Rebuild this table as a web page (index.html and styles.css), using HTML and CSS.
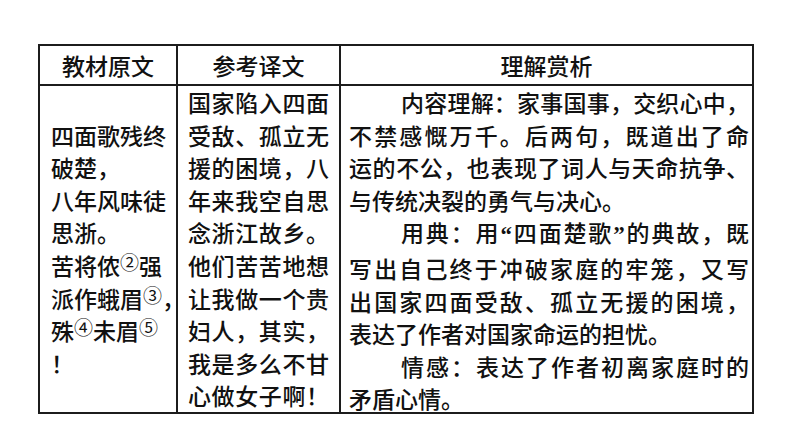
FILE: index.html
```html
<!DOCTYPE html>
<html lang="zh-CN">
<head>
<meta charset="utf-8">
<title>四面歌残终破楚</title>
<link rel="stylesheet" href="styles.css">
</head>
<body>
<div class="page">
  <div class="tbl">
    <div class="cell head">教材原文</div>
    <div class="cell head">参考译文</div>
    <div class="cell head">理解赏析</div>

    <div class="cell body c1">
      <div class="ln">四面歌残终</div>
      <div class="ln">破楚，</div>
      <div class="ln">八年风味徒</div>
      <div class="ln">思浙。</div>
      <div class="ln">苦将侬<span class="sup">②</span>强</div>
      <div class="ln">派作蛾眉<span class="sup">③</span>，</div>
      <div class="ln">殊<span class="sup">④</span>未眉<span class="sup">⑤</span></div>
      <div class="ln">！</div>
    </div>

    <div class="cell body c2">
      <div class="ln j">国家陷入四面</div>
      <div class="ln j">受敌、孤立无</div>
      <div class="ln j">援的困境，八</div>
      <div class="ln j">年来我空自思</div>
      <div class="ln j">念浙江故乡。</div>
      <div class="ln j">他们苦苦地想</div>
      <div class="ln j">让我做一个贵</div>
      <div class="ln j">妇人，其实，</div>
      <div class="ln j">我是多么不甘</div>
      <div class="ln j">心做女子啊！</div>
    </div>

    <div class="cell body c3">
      <div class="ln j ind">内容理解：家事国事，交织心中，</div>
      <div class="ln j">不禁感慨万千。后两句，既道出了命</div>
      <div class="ln j">运的不公，也表现了词人与天命抗争、</div>
      <div class="ln">与传统决裂的勇气与决心。</div>
      <div class="ln j ind">用典：用<span class="q">“</span>四面楚歌<span class="q">”</span>的典故，既</div>
      <div class="ln j">写出自己终于冲破家庭的牢笼，又写</div>
      <div class="ln j">出国家四面受敌、孤立无援的困境，</div>
      <div class="ln">表达了作者对国家命运的担忧。</div>
      <div class="ln j ind">情感：表达了作者初离家庭时的</div>
      <div class="ln">矛盾心情。</div>
    </div>
  </div>
</div>
</body>
</html>
```

FILE: styles.css
```css
* {
  box-sizing: border-box;
}

body {
  margin: 0;
  background: #ffffff;
  color: #111111;
  font-family: "Noto Sans CJK SC", "Noto Sans", sans-serif;
}

.page {
  padding: 44px 0 0 38px;
}

.tbl {
  display: grid;
  grid-template-columns: 138px 163px 413px;
  grid-template-rows: 40px 328px;
  width: max-content;
  border-left: 2px solid #1c1c1c;
  border-top: 2px solid #1c1c1c;
}

.cell {
  border-right: 2px solid #1c1c1c;
  border-bottom: 2px solid #1c1c1c;
  font-size: 23px;
  font-weight: 500;
}

.head {
  display: flex;
  align-items: center;
  justify-content: center;
  line-height: 1;
}

.body {
  line-height: 32.6px;
}

.c1 {
  display: flex;
  flex-direction: column;
  justify-content: center;
  padding-left: 11px;
  white-space: nowrap;
}

.c2 {
  padding: 0 10px 0 10px;
}

.c3 {
  padding: 0 3px 0 8px;
}

.j {
  text-align: justify;
  text-align-last: justify;
}

.ind {
  text-indent: 52px;
}

.sup {
  font-size: 19px;
  font-weight: 400;
  line-height: 0;
  vertical-align: 5px;
}

.q {
  font-family: "Liberation Serif", serif;
  font-weight: 700;
}
```
